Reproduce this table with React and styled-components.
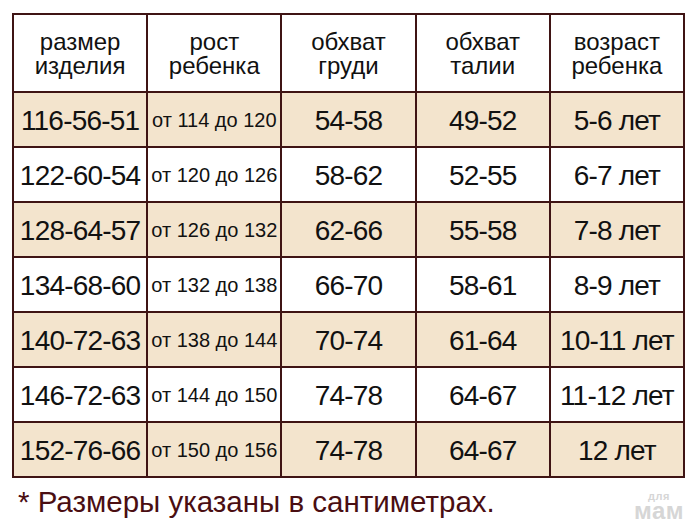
import React from 'react';
import styled, { createGlobalStyle } from 'styled-components';

const GlobalStyle = createGlobalStyle`
  html, body {
    margin: 0;
    padding: 0;
    background: #fff;
  }
  body {
    font-family: 'Liberation Sans', Arial, sans-serif;
    color: #111;
  }
`;

const Page = styled.div`
  position: relative;
  width: 695px;
  height: 529px;
  padding: 13px 0 0 12px;
  box-sizing: border-box;
  overflow: hidden;
`;

const Table = styled.div`
  display: grid;
  width: 673px;
  grid-template-columns: repeat(5, 1fr);
  grid-template-rows: 76px repeat(7, 53px);
  gap: 2px;
  padding: 2px;
  box-sizing: border-box;
  background: #3f1414;
`;

const HeadCell = styled.div`
  background: #fff;
  display: flex;
  align-items: center;
  justify-content: center;
  text-align: center;
  font-size: 24px;
  line-height: 24px;
  color: #111;
  padding-top: 1px;
`;

const Cell = styled.div`
  background: ${p => (p.$shaded ? '#f3e4cd' : '#fff')};
  display: flex;
  align-items: center;
  justify-content: center;
  white-space: nowrap;
  font-size: ${p => (p.$small ? '20px' : '28px')};
  letter-spacing: ${p => (p.$small ? '0' : '-0.8px')};
  color: #111;
  padding-top: 2px;
`;

const Note = styled.div`
  margin: 7px 0 0 6px;
  font-size: 29.5px;
  line-height: 33px;
  color: #4a0e12;
`;

const Watermark = styled.div`
  position: absolute;
  right: 11px;
  bottom: 10px;
  display: flex;
  flex-direction: column;
  align-items: center;
  gap: 1px;
  color: #d6d6d6;
  font-family: 'Liberation Sans', Arial, sans-serif;
  line-height: 1;
`;

const WmSmall = styled.span`
  font-size: 11px;
  font-weight: 700;
  letter-spacing: 0.5px;
  line-height: 11px;
`;

const WmBig = styled.span`
  font-size: 24px;
  font-weight: 700;
  letter-spacing: 0.5px;
  line-height: 16px;
`;

const headers = [
  ['размер', 'изделия'],
  ['рост', 'ребенка'],
  ['обхват', 'груди'],
  ['обхват', 'талии'],
  ['возраст', 'ребенка'],
];

const rows = [
  ['116-56-51', 'от 114 до 120', '54-58', '49-52', '5-6 лет'],
  ['122-60-54', 'от 120 до 126', '58-62', '52-55', '6-7 лет'],
  ['128-64-57', 'от 126 до 132', '62-66', '55-58', '7-8 лет'],
  ['134-68-60', 'от 132 до 138', '66-70', '58-61', '8-9 лет'],
  ['140-72-63', 'от 138 до 144', '70-74', '61-64', '10-11 лет'],
  ['146-72-63', 'от 144 до 150', '74-78', '64-67', '11-12 лет'],
  ['152-76-66', 'от 150 до 156', '74-78', '64-67', '12 лет'],
];

export default function App() {
  return (
    <Page>
      <GlobalStyle />
      <Table>
        {headers.map((h, i) => (
          <HeadCell key={'h' + i}>
            {h[0]}
            <br />
            {h[1]}
          </HeadCell>
        ))}
        {rows.map((r, ri) =>
          r.map((v, ci) => (
            <Cell key={ri + '-' + ci} $shaded={ri % 2 === 0} $small={ci === 1}>
              {v}
            </Cell>
          ))
        )}
      </Table>
      <Note>* Размеры указаны в сантиметрах.</Note>
      <Watermark>
        <WmSmall>для</WmSmall>
        <WmBig>мам</WmBig>
      </Watermark>
    </Page>
  );
}
